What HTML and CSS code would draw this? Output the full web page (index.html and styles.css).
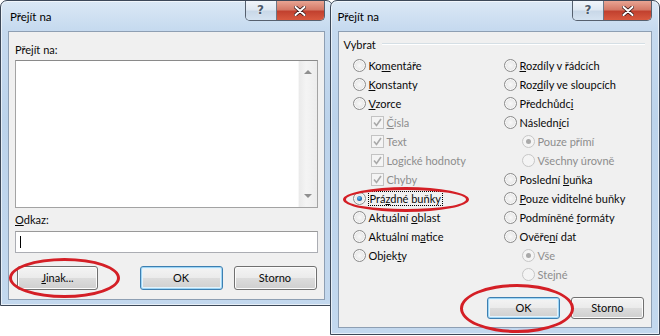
FILE: index.html
```html
<!DOCTYPE html>
<html lang="cs">
<head>
    <meta charset="UTF-8">
    <meta name="viewport" content="width=device-width, initial-scale=1.0">
    <title>Přejít na</title>
    <link rel="stylesheet" href="styles.css">
</head>
<body>
<div class="screen">

    <!-- dialog 1: Přejít na -->
    <div class="window win-left">
        <div class="titlebar">
            <span class="title">Přejít na</span>
            <div class="caption">
                <span class="cap-help">?</span>
                <span class="cap-close">
                    <svg width="12" height="10" viewBox="0 0 12 10">
                        <path d="M1.5 1 L10.5 9 M10.5 1 L1.5 9" stroke="#3b1a1a" stroke-width="3.6" stroke-linecap="round"/>
                        <path d="M1.5 1 L10.5 9 M10.5 1 L1.5 9" stroke="#fff" stroke-width="2" stroke-linecap="round"/>
                    </svg>
                </span>
            </div>
        </div>
        <div class="client client-left">
            <div class="field-label">Přejít na:</div>
            <div class="listbox">
                <div class="list-body"></div>
                <div class="scrollbar">
                    <span class="arrow-up"></span>
                    <span class="arrow-down"></span>
                </div>
            </div>
            <div class="field-label label-gap"><u>O</u>dkaz:</div>
            <div class="textbox"><span class="caret"></span></div>
            <div class="btn-row">
                <span class="btn btn-other"><u>J</u>inak...</span>
                <span class="btn btn-default">OK</span>
                <span class="btn">Storno</span>
            </div>
        </div>
    </div>

    <!-- dialog 2: Přejít na - jinak -->
    <div class="window win-right">
        <div class="titlebar">
            <span class="title">Přejít na</span>
            <div class="caption">
                <span class="cap-help">?</span>
                <span class="cap-close">
                    <svg width="12" height="10" viewBox="0 0 12 10">
                        <path d="M1.5 1 L10.5 9 M10.5 1 L1.5 9" stroke="#3b1a1a" stroke-width="3.6" stroke-linecap="round"/>
                        <path d="M1.5 1 L10.5 9 M10.5 1 L1.5 9" stroke="#fff" stroke-width="2" stroke-linecap="round"/>
                    </svg>
                </span>
            </div>
        </div>
        <div class="client client-right">
            <div class="group-head">
                <span>Vybrat</span>
                <span class="group-line"></span>
            </div>
            <div class="options">
                <div class="col">
                    <div class="opt"><span class="radio"></span><span>Ko<u>m</u>entáře</span></div>
                    <div class="opt"><span class="radio"></span><span><u>K</u>onstanty</span></div>
                    <div class="opt"><span class="radio"></span><span><u>V</u>zorce</span></div>
                    <div class="opt sub off"><span class="check"><svg width="11" height="11" viewBox="0 0 11 11"><path d="M2 5.5 L4.5 8.5 L9 2" fill="none" stroke="#a9a9a9" stroke-width="1.6"/></svg></span><span><u>Č</u>ísla</span></div>
                    <div class="opt sub off"><span class="check"><svg width="11" height="11" viewBox="0 0 11 11"><path d="M2 5.5 L4.5 8.5 L9 2" fill="none" stroke="#a9a9a9" stroke-width="1.6"/></svg></span><span>Text</span></div>
                    <div class="opt sub off"><span class="check"><svg width="11" height="11" viewBox="0 0 11 11"><path d="M2 5.5 L4.5 8.5 L9 2" fill="none" stroke="#a9a9a9" stroke-width="1.6"/></svg></span><span>Logické hodnoty</span></div>
                    <div class="opt sub off"><span class="check"><svg width="11" height="11" viewBox="0 0 11 11"><path d="M2 5.5 L4.5 8.5 L9 2" fill="none" stroke="#a9a9a9" stroke-width="1.6"/></svg></span><span>Chyby</span></div>
                    <div class="opt"><span class="radio on"></span><span class="focus">Prá<u>z</u>dné buňky</span></div>
                    <div class="opt"><span class="radio"></span><span>Aktuální <u>o</u>blast</span></div>
                    <div class="opt"><span class="radio"></span><span>Aktuální m<u>a</u>tice</span></div>
                    <div class="opt"><span class="radio"></span><span>Objek<u>t</u>y</span></div>
                </div>
                <div class="col">
                    <div class="opt"><span class="radio"></span><span><u>R</u>ozdíly v řádcích</span></div>
                    <div class="opt"><span class="radio"></span><span>Roz<u>d</u>íly ve sloupcích</span></div>
                    <div class="opt"><span class="radio"></span><span>Předchůdc<u>i</u></span></div>
                    <div class="opt"><span class="radio"></span><span>Následn<u>í</u>ci</span></div>
                    <div class="opt sub off"><span class="radio on"></span><span>Pouze přímí</span></div>
                    <div class="opt sub off"><span class="radio"></span><span>Všechny úrovně</span></div>
                    <div class="opt"><span class="radio"></span><span>Poslední <u>b</u>uňka</span></div>
                    <div class="opt"><span class="radio"></span><span><u>P</u>ouze viditelné buňky</span></div>
                    <div class="opt"><span class="radio"></span><span>Podmíněné <u>f</u>ormáty</span></div>
                    <div class="opt"><span class="radio"></span><span>Ověře<u>n</u>í dat</span></div>
                    <div class="opt sub off"><span class="radio on"></span><span>Vše</span></div>
                    <div class="opt sub off"><span class="radio"></span><span>Stejné</span></div>
                </div>
            </div>
            <div class="btn-row btn-row-right">
                <span class="btn btn-default">OK</span>
                <span class="btn">Storno</span>
            </div>
        </div>
    </div>

    <!-- red annotation rings -->
    <span class="ring ring-other"></span>
    <span class="ring ring-empty"></span>
    <span class="ring ring-ok"></span>
</div>
</body>
</html>
```

FILE: styles.css
```css
body {
    margin: 0;
    background: #fff;
    font-family: Lato, "Open Sans", sans-serif;
    font-size: 11px;
    color: #0a0a0a;
    overflow: hidden;
}
.screen {
    position: relative;
    display: flex;
    align-items: flex-start;
    width: 660px;
    height: 336px;
}
u {
    text-decoration-thickness: 1px;
    text-underline-offset: 1px;
}

/* window frame */
.window {
    box-sizing: border-box;
    border: 1px solid #3d4858;
    border-radius: 7px 7px 0 0;
    padding: 0 7px 5px 7px;
    background: linear-gradient(180deg, #dbe8f5 0, #c6daef 28px, #bcd3eb 120px, #c3d8ee 100%);
    box-shadow: inset 0 0 0 1px rgba(255, 255, 255, 0.6);
}
.win-left {
    width: 333px;
    height: 306px;
}
.win-right {
    width: 331px;
    height: 335px;
    margin-left: -3px;
    padding-bottom: 7px;
}
.titlebar {
    height: 30px;
    display: flex;
    align-items: flex-start;
}
.title {
    padding: 9px 0 0 2px;
    font-size: 11.5px;
    color: #000;
}
.win-right .title {
    padding-left: 0;
}
.caption {
    margin-left: auto;
    display: flex;
    border: 1px solid #56606e;
    border-top: none;
    border-radius: 0 0 5px 5px;
    overflow: hidden;
    height: 19px;
}
.cap-help {
    width: 30px;
    text-align: center;
    font: bold 12px "DejaVu Sans", sans-serif;
    line-height: 18px;
    color: #4d5a6a;
    text-shadow: 0 0 2px #fff;
    background: linear-gradient(180deg, #f1f5fa 0, #dfe8f2 45%, #c9d8e8 55%, #d5e3f1 100%);
    border-right: 1px solid #6b7685;
}
.cap-close {
    width: 47px;
    display: flex;
    align-items: center;
    justify-content: center;
    background: linear-gradient(180deg, #e8a493 0, #d47a68 45%, #c2412f 55%, #d8593f 100%);
}

/* client area */
.client {
    box-sizing: border-box;
    border: 1px solid #8e9fb3;
    background: #f0f0f0;
}
.client-left {
    height: 269px;
    padding: 11px 6px 0 6px;
}
.client-right {
    height: 297px;
    padding: 5px 6px 0 0;
}
.field-label {
    height: 14px;
    line-height: 14px;
    margin-bottom: 3px;
}
.label-gap {
    margin-top: 5px;
    margin-bottom: 4px;
}
.listbox {
    display: flex;
    height: 148px;
    box-sizing: border-box;
    border: 1px solid #a3a3a3;
    border-top-color: #8a8a8a;
    background: #fff;
}
.list-body {
    flex: 1;
}
.scrollbar {
    width: 18px;
    display: flex;
    flex-direction: column;
    justify-content: space-between;
    align-items: center;
    padding: 9px 0;
    background: linear-gradient(90deg, #eaeaea, #f4f4f4 40%, #ececec);
    border-left: 1px solid #f7f7f7;
}
.arrow-up {
    border: 4px solid transparent;
    border-bottom: 4px solid #8f8f8f;
    border-top: none;
}
.arrow-down {
    border: 4px solid transparent;
    border-top: 4px solid #8f8f8f;
    border-bottom: none;
}
.textbox {
    height: 22px;
    box-sizing: border-box;
    border: 1px solid #abadb3;
    border-top-color: #999;
    background: #fff;
    padding: 4px 4px;
}
.caret {
    display: block;
    width: 1px;
    height: 12px;
    background: #000;
}

/* buttons */
.btn-row {
    display: flex;
    gap: 11px;
    margin-top: 13px;
    padding: 0 1px 0 2px;
}
.btn {
    box-sizing: border-box;
    width: 83px;
    height: 24px;
    line-height: 22px;
    text-align: center;
    border: 1px solid #707070;
    border-radius: 3px;
    background: linear-gradient(180deg, #f4f4f4 0, #ebebeb 48%, #dcdcdc 52%, #cfcfcf 100%);
    box-shadow: inset 0 0 0 1px #fcfcfc;
}
.btn-other {
    width: 81px;
    margin-right: auto;
}
.btn-default {
    border-color: #3c7fb1;
    box-shadow: inset 0 0 0 1px #9fd5f4, inset 0 0 0 2px #e4f3fc;
}
.btn-row-right {
    justify-content: flex-end;
    padding: 0 1px 0 0;
}
.btn-row-right .btn {
    width: 73px;
    height: 22px;
    line-height: 20px;
}

/* option group */
.group-head {
    display: flex;
    align-items: center;
    height: 14px;
    padding-left: 5px;
}
.group-line {
    flex: 1;
    height: 1px;
    margin-left: 6px;
    background: #d5dfe5;
    border-bottom: 1px solid #fff;
}
.options {
    display: grid;
    grid-template-columns: 151px 1fr;
    margin-top: 5px;
    padding-left: 14px;
}
.opt {
    height: 19px;
    display: flex;
    align-items: center;
    white-space: nowrap;
}
.opt.sub {
    padding-left: 18px;
}
.off {
    color: #8d8d8d;
}
.radio {
    box-sizing: border-box;
    width: 13px;
    height: 13px;
    margin-right: 3px;
    border-radius: 50%;
    border: 1px solid #8b8b8b;
    background: radial-gradient(circle at 50% 50%, #f8f8f8 0, #e9e9e9 55%, #d2d2d2 100%);
    box-shadow: inset 0 0 0 1px #fafafa;
    display: flex;
    align-items: center;
    justify-content: center;
}
.radio.on::after {
    content: "";
    width: 5px;
    height: 5px;
    border-radius: 50%;
    background: radial-gradient(circle at 40% 35%, #6fc2f5 0, #1b6bb0 60%, #0d4680 100%);
}
.off .radio {
    border-color: #c6c6c6;
    background: #f4f4f4;
    box-shadow: none;
}
.off .radio.on::after {
    background: #a9a9a9;
}
.check {
    box-sizing: border-box;
    width: 13px;
    height: 13px;
    margin-right: 3px;
    border: 1px solid #c3c3c3;
    background: #f4f4f4;
    display: flex;
    align-items: center;
    justify-content: center;
}
.focus {
    outline: 1px dotted #000;
    outline-offset: 0;
    padding: 0 1px;
    line-height: 13px;
}

/* red annotation rings */
.ring {
    position: absolute;
    box-sizing: border-box;
    border: 3px solid #d41f26;
    border-radius: 50%;
}
.ring-other {
    left: 9px;
    top: 258px;
    width: 111px;
    height: 40px;
}
.ring-empty {
    left: 343px;
    top: 187px;
    width: 126px;
    height: 25px;
}
.ring-ok {
    left: 460px;
    top: 284px;
    width: 114px;
    height: 49px;
}
```
